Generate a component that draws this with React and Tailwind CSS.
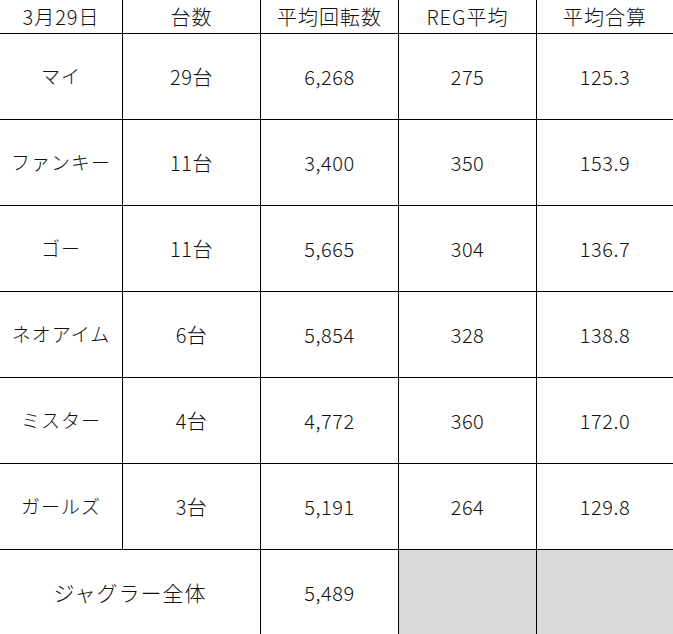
const rows = [
  ["マイ", "29台", "6,268", "275", "125.3"],
  ["ファンキー", "11台", "3,400", "350", "153.9"],
  ["ゴー", "11台", "5,665", "304", "136.7"],
  ["ネオアイム", "6台", "5,854", "328", "138.8"],
  ["ミスター", "4台", "4,772", "360", "172.0"],
  ["ガールズ", "3台", "5,191", "264", "129.8"],
];

const head = ["3月29日", "台数", "平均回転数", "REG平均", "平均合算"];

function Cell({ children, last, className = "" }) {
  return (
    <div
      className={
        "flex items-center justify-center border-b border-black " +
        (last ? "" : "border-r ") +
        className
      }
    >
      {children}
    </div>
  );
}

export default function App() {
  return (
    <div
      className="w-[673px] h-[634px] bg-white text-[#111] text-[20px] font-light tracking-[0.5px] overflow-hidden"
      style={{ fontFamily: '"Noto Sans CJK JP", "Noto Sans", sans-serif' }}
    >
      <div className="grid grid-cols-[123px_138px_138px_138px_136px] grid-rows-[34px_repeat(6,86px)_85px]">
        {head.map((h, i) => (
          <Cell key={h} last={i === 4} className="tracking-[1px]">
            {h}
          </Cell>
        ))}
        {rows.map((r) =>
          r.map((v, i) => (
            <Cell key={r[0] + i} last={i === 4} className={i === 0 ? "text-[19px] tracking-[1px]" : ""}>
              {v}
            </Cell>
          ))
        )}
        <div className="col-span-2 flex items-center justify-center border-r border-black text-[21px] tracking-[1px]">
          ジャグラー全体
        </div>
        <div className="flex items-center justify-center border-r border-black">5,489</div>
        <div className="border-r border-black bg-[#d9d9d9]" />
        <div className="bg-[#d9d9d9]" />
      </div>
    </div>
  );
}
